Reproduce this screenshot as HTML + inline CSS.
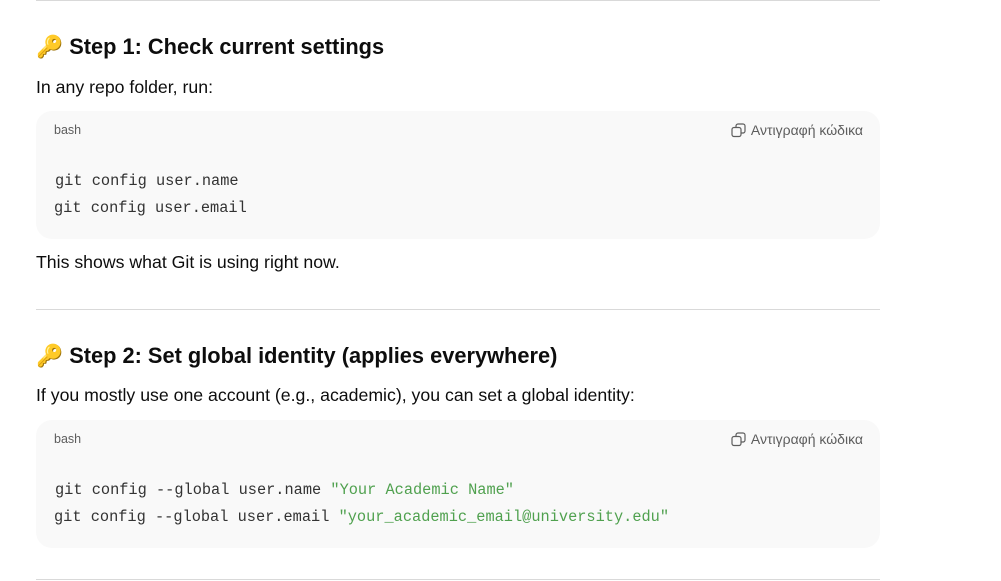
<!DOCTYPE html>
<html><head><meta charset="utf-8"><style>
body{margin:0;background:#fff;width:1001px;height:581px;overflow:hidden;font-family:"Liberation Sans",sans-serif;color:#0d0d0d;position:relative}
hr{position:absolute;left:36px;width:844px;border:0;border-top:1px solid #d9d9d9;margin:0}
h2{position:absolute;left:36px;margin:0;font-size:21.8px;font-weight:bold;line-height:24px;white-space:nowrap}
p{position:absolute;left:36px;margin:0;font-size:17.7px;line-height:20px;white-space:nowrap}
.blk{position:absolute;left:36px;width:844px;height:128px;background:#f9f9f9;border-radius:16px}
.lang{position:absolute;left:18px;top:12px;font-size:12.5px;color:#5d5d5d}
.cp{position:absolute;right:17px;top:11px;font-size:14px;color:#5d5d5d;font-family:"Liberation Sans","DejaVu Sans",sans-serif;white-space:nowrap}
.cp svg{vertical-align:-3px;margin-right:5px}
.code{position:absolute;left:18px;top:57px;font-family:"Liberation Mono",monospace;font-size:15.3px;line-height:27px;white-space:pre;color:#333}
.code .f{padding-left:1px}
.s{color:#50a14f}
</style></head><body>
<hr style="top:0">
<h2 style="top:35px">🔑 Step 1: Check current settings</h2>
<p style="top:77px">In any repo folder, run:</p>
<div class="blk" style="top:111px">
<div class="lang">bash</div>
<div class="cp"><svg width="15" height="15" viewBox="0 0 15 15" fill="none" stroke="#5d5d5d" stroke-width="1.2"><rect x="1" y="4.5" width="9" height="9" rx="2"/><path d="M5 4.5V3a2 2 0 0 1 2-2h5a2 2 0 0 1 2 2v5a2 2 0 0 1-2 2h-2"/></svg>Αντιγραφή κώδικα</div>
<div class="code"><span class="f">git config user.name</span>
git config user.email</div>
</div>
<p style="top:252px">This shows what Git is using right now.</p>
<hr style="top:309px">
<h2 style="top:344px">🔑 Step 2: Set global identity (applies everywhere)</h2>
<p style="top:385px">If you mostly use one account (e.g., academic), you can set a global identity:</p>
<div class="blk" style="top:420px">
<div class="lang">bash</div>
<div class="cp"><svg width="15" height="15" viewBox="0 0 15 15" fill="none" stroke="#5d5d5d" stroke-width="1.2"><rect x="1" y="4.5" width="9" height="9" rx="2"/><path d="M5 4.5V3a2 2 0 0 1 2-2h5a2 2 0 0 1 2 2v5a2 2 0 0 1-2 2h-2"/></svg>Αντιγραφή κώδικα</div>
<div class="code"><span class="f">git config --global user.name <span class="s">"Your Academic Name"</span></span>
git config --global user.email <span class="s">"your_academic_email@university.edu"</span></div>
</div>
<hr style="top:579px">
</body></html>
